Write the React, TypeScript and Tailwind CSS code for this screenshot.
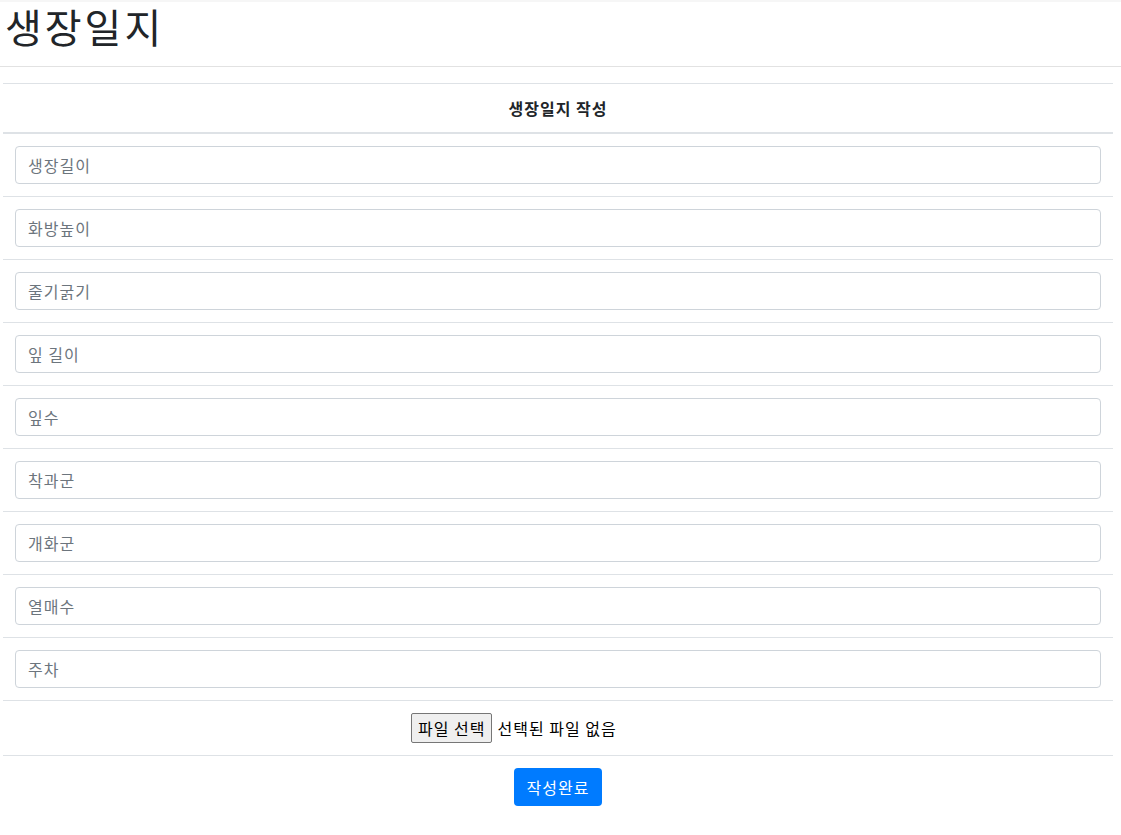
import React from 'react'

const FIELDS = ['생장길이', '화방높이', '줄기굵기', '잎 길이', '잎수', '착과군', '개화군', '열매수', '주차']

export default function App() {
  return (
    <div
      className="min-h-screen bg-white text-[#212529] tracking-[1px]"
      style={{ fontFamily: '"Noto Sans CJK KR", "Noto Sans", sans-serif' }}
    >
      <div className="h-[2px] bg-[#f6f6f6]" />
      <h1 className="pl-[5px] pr-2 text-[40px] leading-[48px] font-normal tracking-[3px]">생장일지</h1>
      <hr className="mt-4 border-t border-[#e2e2e2]" />
      <table className="mt-4 ml-[3px] w-[1110px] border-collapse">
        <thead>
          <tr>
            <th className="border-t border-b-2 border-[#dee2e6] px-3 py-3 text-center text-base leading-6 font-bold">
              생장일지 작성
            </th>
          </tr>
        </thead>
        <tbody>
          {FIELDS.map((f, i) => (
            <tr key={f}>
              <td className={`border-[#dee2e6] px-3 py-3 ${i === 0 ? '' : 'border-t'}`}>
                <input
                  type="text"
                  placeholder={f}
                  className="block h-[38px] w-full rounded border border-[#ced4da] px-3 text-base tracking-[1px] text-[#495057] placeholder:text-[#6c757d] focus:outline-none"
                />
              </td>
            </tr>
          ))}
          <tr>
            <td className="border-t border-[#dee2e6] px-3 py-3">
              {/* native file input look: fixed-width box, content sits left */}
              <div className="mx-auto flex w-[294px] items-center gap-[5px] text-base">
                <span className="h-[30px] rounded-[2px] border border-[#767676] bg-[#efefef] px-[6px] leading-[28px] text-black">
                  파일 선택
                </span>
                <span className="text-black">선택된 파일 없음</span>
              </div>
            </td>
          </tr>
          <tr>
            <td className="border-t border-[#dee2e6] px-3 py-3 text-center">
              <button className="h-[38px] rounded bg-[#007bff] px-[13px] text-base tracking-[1px] text-white">작성완료</button>
            </td>
          </tr>
        </tbody>
      </table>
    </div>
  )
}
